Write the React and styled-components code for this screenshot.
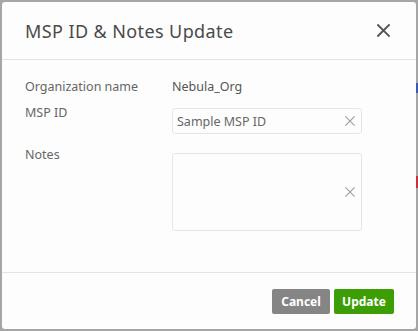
import React from "react";
import styled, { createGlobalStyle } from "styled-components";

const Global = createGlobalStyle`
  html, body { margin: 0; padding: 0; }
  body {
    background: #a6a6a6;
    font-family: "Noto Sans", "Liberation Sans", sans-serif;
    width: 418px;
    height: 331px;
    overflow: hidden;
  }
`;

const Backdrop = styled.div`
  position: relative;
  width: 418px;
  height: 331px;
  padding: 2px;
  box-sizing: border-box;
`;

const EdgeMark = styled.div`
  position: absolute;
  right: 0;
  top: ${(p) => p.$top}px;
  width: 2px;
  height: ${(p) => p.$h}px;
  background: ${(p) => p.$color};
`;

const Modal = styled.div`
  position: relative;
  z-index: 1;
  width: 414px;
  height: 327px;
  background: #fdfdfd;
  border-radius: 3px;
  display: flex;
  flex-direction: column;
  overflow: hidden;
`;

const Header = styled.div`
  height: 57px;
  flex: none;
  display: flex;
  align-items: center;
  justify-content: space-between;
  padding: 0 26px 0 23px;
  border-bottom: 1px solid #e4e4e4;
`;

const Title = styled.h1`
  margin: 0;
  font-size: 18px;
  font-weight: 400;
  color: #4a4a4a;
  letter-spacing: 0.4px;
`;

const CloseButton = styled.button`
  border: 0;
  background: none;
  padding: 0;
  width: 14px;
  height: 14px;
  display: flex;
  align-items: center;
  justify-content: center;
  cursor: pointer;
`;

const Body = styled.div`
  flex: 1;
  padding: 19px 0 0 23px;
  display: flex;
  flex-direction: column;
  gap: 13px;
`;

const Row = styled.div`
  display: flex;
  align-items: flex-start;
  margin-top: ${(p) => p.$mt || 0}px;
`;

const Label = styled.div`
  width: 147px;
  flex: none;
  font-size: 12.5px;
  line-height: 16px;
  color: #666;
  margin-top: ${(p) => p.$offset || 0}px;
`;

const Value = styled.div`
  font-size: 12.5px;
  line-height: 16px;
  color: #555;
`;

const Field = styled.div`
  width: 190px;
  height: ${(p) => p.$h}px;
  box-sizing: border-box;
  border: 1px solid #e6e6e6;
  border-radius: 3px;
  background: #fdfdfd;
  display: flex;
  align-items: center;
  justify-content: space-between;
  padding: 0 6px 0 4px;
`;

const FieldText = styled.span`
  font-size: 12.5px;
  color: #666;
`;

const Footer = styled.div`
  height: 57px;
  flex: none;
  border-top: 1px solid #e4e4e4;
  display: flex;
  justify-content: flex-end;
  align-items: flex-start;
  padding: 16px 22px 0 0;
  gap: 4px;
  box-sizing: border-box;
`;

const Button = styled.button`
  height: 25px;
  width: ${(p) => p.$w}px;
  border: 0;
  border-radius: 2px;
  background: ${(p) => (p.$primary ? "#3d9d05" : "#858585")};
  color: #fff;
  font-family: inherit;
  font-weight: 700;
  font-size: 12px;
  padding: 0;
  cursor: pointer;
`;

const XIcon = ({ size, color, width }) => (
  <svg width={size} height={size} viewBox="0 0 12 12">
    <path
      d="M1 1 L11 11 M11 1 L1 11"
      stroke={color}
      strokeWidth={width}
      strokeLinecap="square"
      fill="none"
    />
  </svg>
);

export default function App() {
  return (
    <>
      <Global />
      <Backdrop>
        <EdgeMark $top={83} $h={10} $color="#3b5bb0" />
        <EdgeMark $top={176} $h={12} $color="#c7323c" />
        <Modal>
          <Header>
            <Title>MSP ID &amp; Notes Update</Title>
            <CloseButton aria-label="Close">
              <XIcon size={13} color="#555" width={1.8} />
            </CloseButton>
          </Header>
          <Body>
            <Row>
              <Label>Organization name</Label>
              <Value>Nebula_Org</Value>
            </Row>
            <Row>
              <Label $offset={-3}>MSP ID</Label>
              <Field $h={26}>
                <FieldText>Sample MSP ID</FieldText>
                <XIcon size={10} color="#a0a0a0" width={1.4} />
              </Field>
            </Row>
            <Row $mt={6}>
              <Label $offset={-6}>Notes</Label>
              <Field $h={78}>
                <FieldText />
                <XIcon size={10} color="#a0a0a0" width={1.4} />
              </Field>
            </Row>
          </Body>
          <Footer>
            <Button $w={58}>Cancel</Button>
            <Button $w={60} $primary>
              Update
            </Button>
          </Footer>
        </Modal>
      </Backdrop>
    </>
  );
}
